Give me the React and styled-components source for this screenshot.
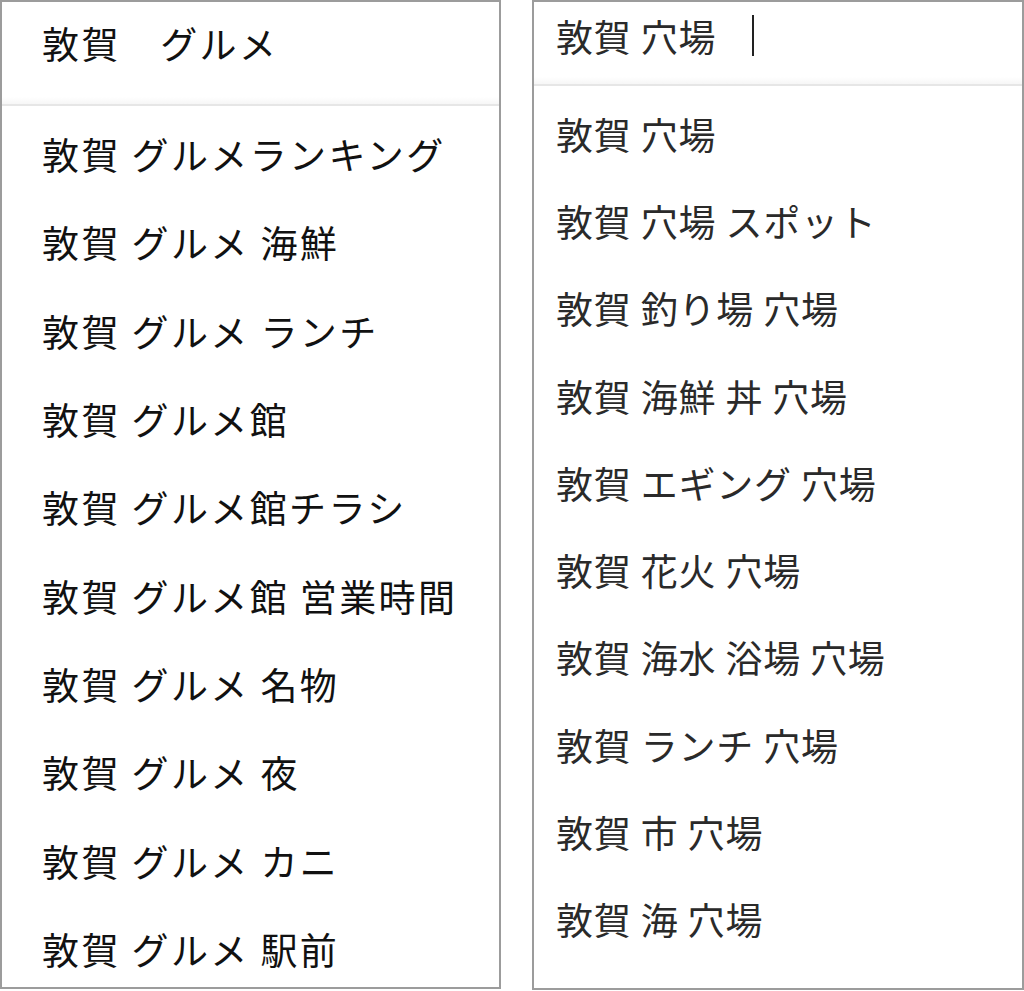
import React from 'react';
import styled, { createGlobalStyle } from 'styled-components';

const GlobalStyle = createGlobalStyle`
  html, body {
    margin: 0;
    padding: 0;
    background: #fff;
  }
  body {
    font-family: "Noto Sans CJK JP", "Noto Sans", sans-serif;
  }
`;

const Page = styled.div`
  display: flex;
  align-items: flex-start;
  gap: 31px;
  width: 1024px;
  height: 991px;
`;

const Panel = styled.div`
  box-sizing: border-box;
  width: ${(p) => p.$width}px;
  height: ${(p) => p.$height}px;
  border: 2px solid #9c9c9c;
  background: #fff;
  display: flex;
  flex-direction: column;
  overflow: hidden;
`;

const Header = styled.div`
  box-sizing: border-box;
  height: ${(p) => p.$height}px;
  flex-shrink: 0;
  display: flex;
  align-items: center;
  padding-left: ${(p) => p.$pad}px;
  padding-bottom: ${(p) => p.$shift}px;
  border-bottom: 2px solid #e6e6e6;
  background: linear-gradient(to bottom, #fff calc(100% - 7px), #f6f6f6 100%);
  font-size: 37px;
  letter-spacing: ${(p) => p.$spacing}px;
  color: ${(p) => p.$color};
  white-space: pre;
`;

const Cursor = styled.span`
  display: inline-block;
  width: 2px;
  height: 41px;
  margin-left: 36px;
  background: #222;
`;

const List = styled.ul`
  list-style: none;
  margin: 0;
  padding: ${(p) => p.$top}px 0 0 ${(p) => p.$pad}px;
`;

const Item = styled.li`
  height: ${(p) => p.$pitch}px;
  display: flex;
  align-items: center;
  font-size: 37px;
  letter-spacing: ${(p) => p.$spacing}px;
  color: ${(p) => p.$color};
  white-space: pre;
`;

const gourmet = [
  '敦賀 グルメランキング',
  '敦賀 グルメ 海鮮',
  '敦賀 グルメ ランチ',
  '敦賀 グルメ館',
  '敦賀 グルメ館チラシ',
  '敦賀 グルメ館 営業時間',
  '敦賀 グルメ 名物',
  '敦賀 グルメ 夜',
  '敦賀 グルメ カニ',
  '敦賀 グルメ 駅前',
];

const spots = [
  '敦賀 穴場',
  '敦賀 穴場 スポット',
  '敦賀 釣り場 穴場',
  '敦賀 海鮮 丼 穴場',
  '敦賀 エギング 穴場',
  '敦賀 花火 穴場',
  '敦賀 海水 浴場 穴場',
  '敦賀 ランチ 穴場',
  '敦賀 市 穴場',
  '敦賀 海 穴場',
];

const App = () => (
  <>
    <GlobalStyle />
    <Page>
      <Panel $width={501} $height={989}>
        <Header $height={104} $pad={40} $shift={21} $spacing={2.4} $color="#111">
          敦賀　グルメ
        </Header>
        <List $top={4} $pad={40}>
          {gourmet.map((text) => (
            <Item key={text} $pitch={88.3} $spacing={2.4} $color="#111">
              {text}
            </Item>
          ))}
        </List>
      </Panel>
      <Panel $width={492} $height={990}>
        <Header $height={84} $pad={22} $shift={15} $spacing={0.8} $color="#2a2a2a">
          敦賀 穴場
          <Cursor />
        </Header>
        <List $top={4} $pad={22}>
          {spots.map((text) => (
            <Item key={text} $pitch={87.3} $spacing={0.8} $color="#2a2a2a">
              {text}
            </Item>
          ))}
        </List>
      </Panel>
    </Page>
  </>
);

export default App;
